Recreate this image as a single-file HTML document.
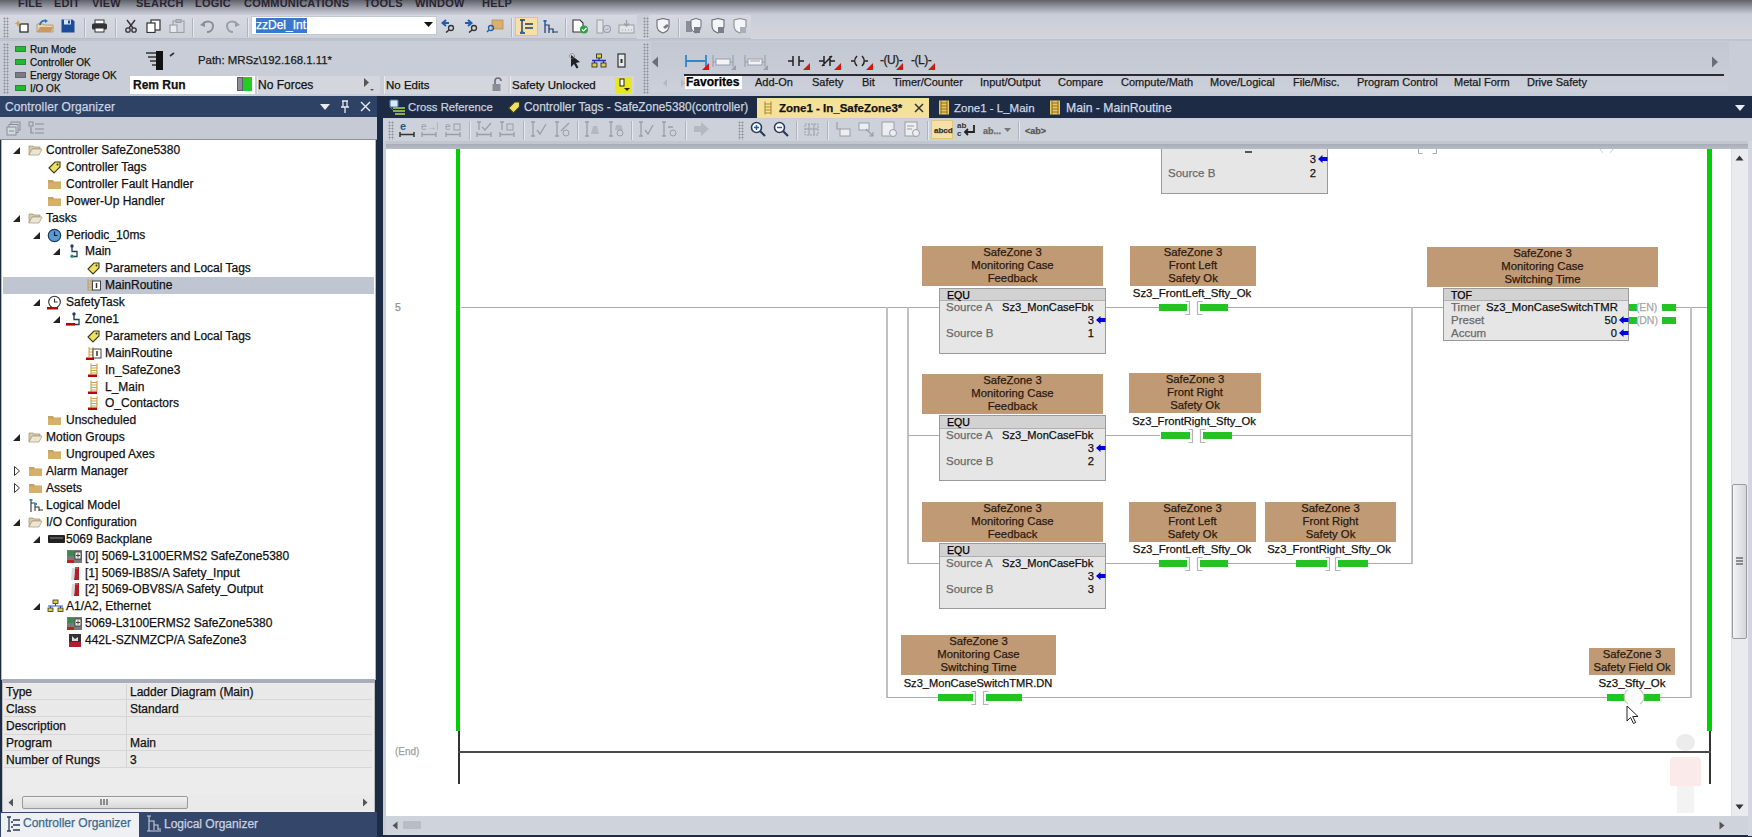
<!DOCTYPE html>
<html><head><meta charset="utf-8">
<style>
*{box-sizing:border-box;margin:0;padding:0}
html,body{width:1752px;height:837px;overflow:hidden;background:#cacfd9;font-family:"Liberation Sans",sans-serif;color:#111;position:relative}
.a{position:absolute;white-space:nowrap}
#menubar{left:0;top:0;width:1752px;height:14px;background:linear-gradient(#5f616b,#9c9fa9 55%,#c6cad4)}
#menubar span{position:absolute;top:-3.5px;font-size:11px;font-weight:bold;color:#2a2430;letter-spacing:0.2px}
#tb1{left:0;top:14px;width:1752px;height:27px;background:linear-gradient(#c9cdd7,#d3d6df)}
#status{left:0;top:41px;width:1752px;height:55px;background:#c9cdd7}
#navy{left:0;top:96px;width:1752px;height:741px;background:#1e2b45}
#lefthdr{left:0;top:96px;width:377px;height:21px;background:#2e4266}
#lefttool{left:0;top:117px;width:377px;height:23px;background:#c6cad5;border-bottom:1px solid #8e929c}
#tree{left:2px;top:140px;width:373px;height:539px;background:#fff}
#props{left:2px;top:680px;width:373px;height:131px;background:#e9e9e9}
#ltabs{left:0;top:812px;width:377px;height:25px;background:#34476a}
#rtool{left:383px;top:118px;width:1369px;height:25px;background:#c9cdd7}
#ladder{left:386px;top:149px;width:1345px;height:667px;background:#fff}
#vscroll{left:1731px;top:149px;width:19px;height:667px;background:#e6e8ec}
#hscroll{left:386px;top:816px;width:1366px;height:19px;background:#d4d8e0}
.tr{position:absolute;font-size:12px;color:#111;white-space:nowrap;line-height:14px}
.lt{position:absolute;font-size:11px;color:#000;white-space:nowrap}
.desc{position:absolute;background:#c09a75;font-size:11px;color:#2a1a10;text-align:center;line-height:13px;padding-top:0}
.box{position:absolute;background:#e6e6e6;border:1px solid #9a9a9a}
.box .h{position:absolute;left:0;top:0;right:0;height:12px;background:#d2d2d2;border-bottom:1px solid #b0b0b0;font-size:10.6px;padding-left:7px;line-height:12px;color:#000}
.lbl{position:absolute;font-size:11px;color:#6a6a6a;white-space:nowrap;line-height:13px}
.val{position:absolute;font-size:11px;color:#111;white-space:nowrap;line-height:13px}
.hl{position:absolute;height:1px;background:#a9a9a9}
.vl{position:absolute;width:1px;background:#b5b5b5}
.gb{position:absolute;height:7px;background:#22c422}
.grip{width:6px;background-image:radial-gradient(circle,#8e929c 0.9px,transparent 1.1px);background-size:3px 3px}
.sep{width:1px;height:19px;background:#b0b4be;box-shadow:1px 0 0 #e6e8ee}
.tabs span{top:0}
.tr,.val,.desc,.lbl,.box .h,.tabs{-webkit-text-stroke:0.25px currentColor}
</style></head><body>


<div id="menubar" class="a">
<span style="left:18px">FILE</span><span style="left:54px">EDIT</span><span style="left:92px">VIEW</span><span style="left:136px">SEARCH</span><span style="left:195px">LOGIC</span><span style="left:244px">COMMUNICATIONS</span><span style="left:364px">TOOLS</span><span style="left:415px">WINDOW</span><span style="left:482px">HELP</span>
</div>
<div id="tb1" class="a"></div>
<div id="status" class="a"></div>
<div id="navy" class="a"></div>
<div id="lefthdr" class="a"></div>
<div id="lefttool" class="a"></div>
<div id="tree" class="a"></div>
<div id="props" class="a"></div>
<div id="ltabs" class="a"></div>
<div id="rtool" class="a"></div>
<div id="ladder" class="a"></div>
<div id="vscroll" class="a"></div>
<div id="hscroll" class="a"></div>


<div class="a" style="left:3px;top:277px;width:371px;height:17px;background:#bfc6d2"></div>
<svg class="a" style="left:13px;top:145px" width="8" height="10"><path d="M7 2v7H0z" fill="#222"/></svg>
<div class="a" style="left:28px;top:143px;line-height:0"><svg width="15" height="14"><path d="M1 3h4l1 1h6v2H4L1 12z" fill="#d8ccb0" stroke="#a8946c" stroke-width="0.8"/><path d="M1 12l3-6h10l-3 6z" fill="#eee6d4" stroke="#b0a080" stroke-width="0.8"/></svg></div>
<div class="tr" style="left:46px;top:143px">Controller SafeZone5380</div>
<div class="a" style="left:47px;top:160px;line-height:0"><svg width="15" height="14"><path d="M2 8l6-6h5v5l-6 6z" fill="#f0e060" stroke="#3a3a20" stroke-width="1.1"/><circle cx="10.5" cy="4.5" r="1" fill="#333"/></svg></div>
<div class="tr" style="left:66px;top:160px">Controller Tags</div>
<div class="a" style="left:47px;top:177px;line-height:0"><svg width="15" height="14"><path d="M1 3h5l1 1.5h7V12H1z" fill="#c8a35e"/><path d="M1 5.5h13V12H1z" fill="#d4b06a"/></svg></div>
<div class="tr" style="left:66px;top:177px">Controller Fault Handler</div>
<div class="a" style="left:47px;top:194px;line-height:0"><svg width="15" height="14"><path d="M1 3h5l1 1.5h7V12H1z" fill="#c8a35e"/><path d="M1 5.5h13V12H1z" fill="#d4b06a"/></svg></div>
<div class="tr" style="left:66px;top:194px">Power-Up Handler</div>
<svg class="a" style="left:13px;top:213px" width="8" height="10"><path d="M7 2v7H0z" fill="#222"/></svg>
<div class="a" style="left:28px;top:211px;line-height:0"><svg width="15" height="14"><path d="M1 3h4l1 1h6v2H4L1 12z" fill="#d8ccb0" stroke="#a8946c" stroke-width="0.8"/><path d="M1 12l3-6h10l-3 6z" fill="#eee6d4" stroke="#b0a080" stroke-width="0.8"/></svg></div>
<div class="tr" style="left:46px;top:211px">Tasks</div>
<svg class="a" style="left:33px;top:230px" width="8" height="10"><path d="M7 2v7H0z" fill="#222"/></svg>
<div class="a" style="left:47px;top:228px;line-height:0"><svg width="15" height="15"><circle cx="7.5" cy="7.5" r="6.2" fill="#5b9bd5" stroke="#1f3a5a" stroke-width="1.2"/><path d="M7.5 3.5v4h3" stroke="#0a1a30" stroke-width="1.2" fill="none"/></svg></div>
<div class="tr" style="left:66px;top:228px">Periodic_10ms</div>
<svg class="a" style="left:53px;top:246px" width="8" height="10"><path d="M7 2v7H0z" fill="#222"/></svg>
<div class="a" style="left:66px;top:244px;line-height:0"><svg width="15" height="14"><path d="M6 2v5.5h5v5H6.5" stroke="#1f3f60" stroke-width="1.3" fill="none"/><circle cx="6" cy="2" r="1.7" fill="#1f3f60"/><circle cx="6" cy="12.2" r="1.7" fill="#2a8a7a"/></svg></div>
<div class="tr" style="left:85px;top:244px">Main</div>
<div class="a" style="left:86px;top:261px;line-height:0"><svg width="15" height="14"><path d="M2 8l6-6h5v5l-6 6z" fill="#f0e060" stroke="#3a3a20" stroke-width="1.1"/><circle cx="10.5" cy="4.5" r="1" fill="#333"/></svg></div>
<div class="tr" style="left:105px;top:261px">Parameters and Local Tags</div>
<div class="a" style="left:86px;top:278px;line-height:0"><svg width="16" height="14"><path d="M2 1v12M6 1v12M2 3h4M2 6h4M2 9h4M2 12h4" stroke="#c8a040" stroke-width="1"/><rect x="6.5" y="3" width="8" height="9" fill="#fff" stroke="#444" stroke-width="1"/><path d="M10.5 5v5" stroke="#333" stroke-width="1.5"/></svg></div>
<div class="tr" style="left:105px;top:278px">MainRoutine</div>
<svg class="a" style="left:33px;top:297px" width="8" height="10"><path d="M7 2v7H0z" fill="#222"/></svg>
<div class="a" style="left:47px;top:295px;line-height:0"><svg width="15" height="15"><circle cx="7.5" cy="7" r="5.8" fill="#fff" stroke="#333" stroke-width="1.1"/><path d="M7.5 3.5v3.5h3" stroke="#333" stroke-width="1.1" fill="none"/><rect x="0" y="12" width="11" height="2.5" fill="#b00"/></svg></div>
<div class="tr" style="left:66px;top:295px">SafetyTask</div>
<svg class="a" style="left:53px;top:314px" width="8" height="10"><path d="M7 2v7H0z" fill="#222"/></svg>
<div class="a" style="left:66px;top:312px;line-height:0"><svg width="15" height="14"><path d="M8 2v5.5h5v5H8.5" stroke="#1f3f60" stroke-width="1.3" fill="none"/><circle cx="8" cy="2" r="1.7" fill="#1f3f60"/><rect x="0" y="11" width="9" height="2.6" fill="#b00"/></svg></div>
<div class="tr" style="left:85px;top:312px">Zone1</div>
<div class="a" style="left:86px;top:329px;line-height:0"><svg width="15" height="14"><path d="M2 8l6-6h5v5l-6 6z" fill="#f0e060" stroke="#3a3a20" stroke-width="1.1"/><circle cx="10.5" cy="4.5" r="1" fill="#333"/></svg></div>
<div class="tr" style="left:105px;top:329px">Parameters and Local Tags</div>
<div class="a" style="left:86px;top:346px;line-height:0"><svg width="16" height="14"><path d="M3 1v10M7 1v10M3 3h4M3 6h4M3 9h4" stroke="#c8a040" stroke-width="1"/><rect x="7" y="3" width="8" height="9" fill="#fff" stroke="#444" stroke-width="1"/><path d="M11 5v5" stroke="#333" stroke-width="1.5"/><rect x="0" y="11.5" width="8" height="2.5" fill="#b00"/></svg></div>
<div class="tr" style="left:105px;top:346px">MainRoutine</div>
<div class="a" style="left:86px;top:363px;line-height:0"><svg width="16" height="14"><path d="M5 0.5v11M11 0.5v11M5 2.5h6M5 5h6M5 7.5h6M5 10h6" stroke="#c8a040" stroke-width="1.1"/><rect x="2" y="11.5" width="9" height="2.5" fill="#b00"/></svg></div>
<div class="tr" style="left:105px;top:363px">In_SafeZone3</div>
<div class="a" style="left:86px;top:380px;line-height:0"><svg width="16" height="14"><path d="M5 0.5v11M11 0.5v11M5 2.5h6M5 5h6M5 7.5h6M5 10h6" stroke="#c8a040" stroke-width="1.1"/><rect x="2" y="11.5" width="9" height="2.5" fill="#b00"/></svg></div>
<div class="tr" style="left:105px;top:380px">L_Main</div>
<div class="a" style="left:86px;top:396px;line-height:0"><svg width="16" height="14"><path d="M5 0.5v11M11 0.5v11M5 2.5h6M5 5h6M5 7.5h6M5 10h6" stroke="#c8a040" stroke-width="1.1"/><rect x="2" y="11.5" width="9" height="2.5" fill="#b00"/></svg></div>
<div class="tr" style="left:105px;top:396px">O_Contactors</div>
<div class="a" style="left:47px;top:413px;line-height:0"><svg width="15" height="14"><path d="M1 3h5l1 1.5h7V12H1z" fill="#c8a35e"/><path d="M1 5.5h13V12H1z" fill="#d4b06a"/></svg></div>
<div class="tr" style="left:66px;top:413px">Unscheduled</div>
<svg class="a" style="left:13px;top:432px" width="8" height="10"><path d="M7 2v7H0z" fill="#222"/></svg>
<div class="a" style="left:28px;top:430px;line-height:0"><svg width="15" height="14"><path d="M1 3h4l1 1h6v2H4L1 12z" fill="#d8ccb0" stroke="#a8946c" stroke-width="0.8"/><path d="M1 12l3-6h10l-3 6z" fill="#eee6d4" stroke="#b0a080" stroke-width="0.8"/></svg></div>
<div class="tr" style="left:46px;top:430px">Motion Groups</div>
<div class="a" style="left:47px;top:447px;line-height:0"><svg width="15" height="14"><path d="M1 3h5l1 1.5h7V12H1z" fill="#c8a35e"/><path d="M1 5.5h13V12H1z" fill="#d4b06a"/></svg></div>
<div class="tr" style="left:66px;top:447px">Ungrouped Axes</div>
<svg class="a" style="left:13px;top:465px" width="8" height="12"><path d="M1.5 1.5l5 4.5-5 4.5z" fill="#fff" stroke="#333" stroke-width="1"/></svg>
<div class="a" style="left:28px;top:464px;line-height:0"><svg width="15" height="14"><path d="M1 3h5l1 1.5h7V12H1z" fill="#c8a35e"/><path d="M1 5.5h13V12H1z" fill="#d4b06a"/></svg></div>
<div class="tr" style="left:46px;top:464px">Alarm Manager</div>
<svg class="a" style="left:13px;top:482px" width="8" height="12"><path d="M1.5 1.5l5 4.5-5 4.5z" fill="#fff" stroke="#333" stroke-width="1"/></svg>
<div class="a" style="left:28px;top:481px;line-height:0"><svg width="15" height="14"><path d="M1 3h5l1 1.5h7V12H1z" fill="#c8a35e"/><path d="M1 5.5h13V12H1z" fill="#d4b06a"/></svg></div>
<div class="tr" style="left:46px;top:481px">Assets</div>
<div class="a" style="left:28px;top:498px;line-height:0"><svg width="16" height="15"><path d="M3 1v13M3 5h4v8M7 9h4v4M11 12h4" stroke="#333" stroke-width="1.1" fill="none"/><rect x="1.5" y="1" width="3" height="2" fill="#3a8ac0"/><rect x="6" y="5" width="3" height="2" fill="#3a8ac0"/></svg></div>
<div class="tr" style="left:46px;top:498px">Logical Model</div>
<svg class="a" style="left:13px;top:517px" width="8" height="10"><path d="M7 2v7H0z" fill="#222"/></svg>
<div class="a" style="left:28px;top:515px;line-height:0"><svg width="15" height="14"><path d="M1 3h4l1 1h6v2H4L1 12z" fill="#d8ccb0" stroke="#a8946c" stroke-width="0.8"/><path d="M1 12l3-6h10l-3 6z" fill="#eee6d4" stroke="#b0a080" stroke-width="0.8"/></svg></div>
<div class="tr" style="left:46px;top:515px">I/O Configuration</div>
<svg class="a" style="left:33px;top:534px" width="8" height="10"><path d="M7 2v7H0z" fill="#222"/></svg>
<div class="a" style="left:47px;top:532px;line-height:0"><svg width="19" height="14"><rect x="1" y="3" width="17" height="8" rx="1" fill="#222"/><rect x="3" y="5" width="13" height="2" fill="#555"/></svg></div>
<div class="tr" style="left:66px;top:532px">5069 Backplane</div>
<div class="a" style="left:66px;top:549px;line-height:0"><svg width="17" height="15"><rect x="1" y="1" width="15" height="13" fill="#7a7a7a"/><rect x="2" y="2" width="6" height="5" fill="#3a8a4a"/><rect x="9" y="3" width="6" height="7" fill="#eee" stroke="#333" stroke-width="0.8"/><path d="M12 4.5v4M10 6.5h4" stroke="#333" stroke-width="0.9"/><rect x="1" y="11" width="7" height="3" fill="#b22"/></svg></div>
<div class="tr" style="left:85px;top:549px">[0] 5069-L3100ERMS2 SafeZone5380</div>
<div class="a" style="left:66px;top:566px;line-height:0"><svg width="17" height="15"><path d="M9 1h4v13H8z" fill="#b0202a"/><path d="M6 2h3l-1 12H5z" fill="#d8d8d8"/><path d="M9 1h3v2H9z" fill="#e04050"/></svg></div>
<div class="tr" style="left:85px;top:566px">[1] 5069-IB8S/A Safety_Input</div>
<div class="a" style="left:66px;top:582px;line-height:0"><svg width="17" height="15"><path d="M9 1h4v13H8z" fill="#b0202a"/><path d="M6 2h3l-1 12H5z" fill="#d8d8d8"/><path d="M9 1h3v2H9z" fill="#e04050"/></svg></div>
<div class="tr" style="left:85px;top:582px">[2] 5069-OBV8S/A Safety_Output</div>
<svg class="a" style="left:33px;top:601px" width="8" height="10"><path d="M7 2v7H0z" fill="#222"/></svg>
<div class="a" style="left:47px;top:599px;line-height:0"><svg width="17" height="14"><rect x="6" y="1" width="5" height="3.5" fill="#d8d040" stroke="#333" stroke-width="0.8"/><path d="M8.5 4.5v2.5M1 7h15M3.5 7v2M13.5 7v2" stroke="#3050c0" stroke-width="1.2"/><rect x="1" y="9" width="5" height="3.5" fill="#d8d040" stroke="#333" stroke-width="0.8"/><rect x="11" y="9" width="5" height="3.5" fill="#d8d040" stroke="#333" stroke-width="0.8"/></svg></div>
<div class="tr" style="left:66px;top:599px">A1/A2, Ethernet</div>
<div class="a" style="left:66px;top:616px;line-height:0"><svg width="17" height="15"><rect x="1" y="1" width="15" height="13" fill="#7a7a7a"/><rect x="2" y="2" width="6" height="5" fill="#3a8a4a"/><rect x="9" y="3" width="6" height="7" fill="#eee" stroke="#333" stroke-width="0.8"/><path d="M12 4.5v4M10 6.5h4" stroke="#333" stroke-width="0.9"/><rect x="1" y="11" width="7" height="3" fill="#b22"/></svg></div>
<div class="tr" style="left:85px;top:616px">5069-L3100ERMS2 SafeZone5380</div>
<div class="a" style="left:66px;top:633px;line-height:0"><svg width="17" height="15"><rect x="3" y="1" width="12" height="13" fill="#333"/><rect x="3" y="9" width="12" height="5" fill="#b0202a"/><path d="M6 3l3 3 3-2v4H6z" fill="#ddd"/></svg></div>
<div class="tr" style="left:85px;top:633px">442L-SZNMZCP/A SafeZone3</div>
<!-- left header -->
<div class="tr" style="left:5px;top:100px;color:#cbd3e2;font-size:12px;letter-spacing:0.1px">Controller Organizer</div>
<svg class="a" style="left:319px;top:103px" width="12" height="8"><path d="M1 1h10l-5 6z" fill="#e8ecf4"/></svg>
<svg class="a" style="left:340px;top:100px" width="10" height="14"><path d="M2 1h6M3 1v6h4V1M1 7h8M5 7v6" stroke="#e8ecf4" stroke-width="1.3" fill="none"/></svg>
<svg class="a" style="left:360px;top:101px" width="11" height="11"><path d="M1 1l9 9M10 1l-9 9" stroke="#e8ecf4" stroke-width="1.4"/></svg>
<!-- left toolstrip icons -->
<svg class="a" style="left:6px;top:121px" width="16" height="15"><rect x="5" y="1" width="9" height="8" fill="none" stroke="#8a8e98"/><rect x="3" y="3.5" width="9" height="8" fill="#d4d7de" stroke="#8a8e98"/><rect x="1" y="6" width="9" height="8" fill="#d4d7de" stroke="#8a8e98"/><path d="M3 10h5" stroke="#8a8e98"/></svg>
<svg class="a" style="left:28px;top:121px" width="17" height="15"><rect x="1" y="1" width="4" height="4" fill="none" stroke="#8a8e98"/><path d="M7 3h9M7 8h9M7 12h9M3 6v6h3" stroke="#8a8e98" stroke-width="1.2" fill="none"/></svg>
<!-- tree border -->
<div class="a" style="left:1px;top:140px;width:375px;height:540px;border:1px solid #b4b8c2;border-top:none"></div>
<!-- props -->
<div class="a" style="left:2px;top:679px;width:373px;height:4px;background:#a9adb7"></div>
<div class="a" style="left:2px;top:683px;width:373px;height:129px;background:#ececec;border-left:1px solid #bbb;border-right:1px solid #bbb"></div>
<div class="a" style="left:4px;top:684px;width:368px;height:84px;background:
linear-gradient(#d6d6d6,#d6d6d6) 0 15px/100% 1px no-repeat,
linear-gradient(#d6d6d6,#d6d6d6) 0 32px/100% 1px no-repeat,
linear-gradient(#d6d6d6,#d6d6d6) 0 50px/100% 1px no-repeat,
linear-gradient(#d6d6d6,#d6d6d6) 0 66px/100% 1px no-repeat,
linear-gradient(#d6d6d6,#d6d6d6) 0 83px/100% 1px no-repeat,
linear-gradient(#d6d6d6,#d6d6d6) 122px 0/1px 100% no-repeat,#e9e9e9"></div>
<div class="tr" style="left:6px;top:685px">Type</div><div class="tr" style="left:130px;top:685px">Ladder Diagram (Main)</div>
<div class="tr" style="left:6px;top:702px">Class</div><div class="tr" style="left:130px;top:702px">Standard</div>
<div class="tr" style="left:6px;top:719px">Description</div>
<div class="tr" style="left:6px;top:736px">Program</div><div class="tr" style="left:130px;top:736px">Main</div>
<div class="tr" style="left:6px;top:753px">Number of Rungs</div><div class="tr" style="left:130px;top:753px">3</div>
<!-- props hscroll -->
<div class="a" style="left:3px;top:795px;width:371px;height:15px;background:#eaeaea"></div>
<svg class="a" style="left:8px;top:798px" width="6" height="9"><path d="M5 0.5v8L0.5 4.5z" fill="#555"/></svg>
<svg class="a" style="left:362px;top:798px" width="6" height="9"><path d="M1 0.5v8L5.5 4.5z" fill="#555"/></svg>
<div class="a" style="left:22px;top:796px;width:166px;height:13px;border:1px solid #9a9a9a;border-radius:2px;background:linear-gradient(#f2f2f2,#d8d8d8)"></div>
<svg class="a" style="left:100px;top:799px" width="8" height="6"><path d="M1 0v6M4 0v6M7 0v6" stroke="#333" stroke-width="1"/></svg>
<!-- bottom tabs -->
<div class="a" style="left:1px;top:813px;width:138px;height:24px;background:#eef0f4"></div>
<svg class="a" style="left:5px;top:816px" width="16" height="17"><path d="M2 1h4M4 1v14M2 15h4M8 4h7M8 9h7M8 14h7M6 6h2M6 11h2" stroke="#2a3a5a" stroke-width="1.3" fill="none"/></svg>
<div class="tr" style="left:23px;top:816px;color:#3a6a8e;font-size:12px">Controller Organizer</div>
<svg class="a" style="left:145px;top:815px" width="17" height="17"><path d="M2 1h4M4 1v15M4 6h5v9M9 10h4v5M13 14h3M2 16h14" stroke="#c8d0e0" stroke-width="1.1" fill="none"/></svg>
<div class="tr" style="left:164px;top:817px;color:#c9d1e0;font-size:12px">Logical Organizer</div>
<!-- toolbar row 1 -->
<div class="a" style="left:0;top:15px;width:637px;height:24px;background:linear-gradient(#d6d9e1,#cdd1da);border-bottom:1px solid #b9bdc7"></div>
<div class="a" style="left:649px;top:15px;width:102px;height:24px;background:linear-gradient(#d6d9e1,#cdd1da);border-bottom:1px solid #b9bdc7"></div>
<div class="a" style="left:0;top:39px;width:1752px;height:2px;background:#bfc3cd"></div>
<div class="a grip" style="left:3px;top:17px;height:21px"></div>
<div class="a grip" style="left:643px;top:17px;height:21px"></div>
<div class="a grip" style="left:3px;top:43px;height:51px"></div>
<div class="a grip" style="left:643px;top:43px;height:51px"></div>
<!-- new -->
<svg class="a" style="left:14px;top:19px" width="16" height="14"><rect x="6" y="5" width="8" height="8" fill="#fff" stroke="#222" stroke-width="1.2"/><path d="M4 1l1 2.5 2.5 1-2.5 1L4 8 3 5.5.5 4.5 3 3.5z" fill="#d8a040"/></svg>
<!-- open -->
<svg class="a" style="left:36px;top:19px" width="18" height="14"><path d="M1 5h6l1 1h9v7H1z" fill="#e8d6b0" stroke="#b09060" stroke-width="0.8"/><path d="M1 13l3-5h13l-2 5z" fill="#c89a60"/><path d="M4 6c0-3 3-5 6-4" stroke="#2a70c0" stroke-width="1.8" fill="none"/><path d="M9 0l3 2-3 2z" fill="#2a70c0"/></svg>
<!-- save -->
<svg class="a" style="left:61px;top:19px" width="14" height="14"><path d="M0.5 0.5h11l2 2v11h-13z" fill="#1a4c9a"/><rect x="3" y="0.5" width="7" height="5" fill="#d8e2f0"/><rect x="7" y="1.5" width="2" height="3" fill="#1a4c9a"/></svg>
<div class="a sep" style="left:84px;top:18px"></div>
<!-- print -->
<svg class="a" style="left:91px;top:19px" width="17" height="14"><rect x="4" y="1" width="9" height="4" fill="#fff" stroke="#333"/><rect x="1" y="4.5" width="15" height="6" rx="1.5" fill="#333"/><rect x="4" y="9" width="9" height="4" fill="#fff" stroke="#333"/></svg>
<div class="a sep" style="left:115px;top:18px"></div>
<!-- cut -->
<svg class="a" style="left:124px;top:19px" width="14" height="14"><path d="M3 1l6 8M11 1L5 9" stroke="#333" stroke-width="1.4"/><circle cx="4" cy="11" r="2.2" fill="none" stroke="#333" stroke-width="1.3"/><circle cx="10" cy="11" r="2.2" fill="none" stroke="#333" stroke-width="1.3"/></svg>
<!-- copy -->
<svg class="a" style="left:146px;top:19px" width="15" height="14"><rect x="5" y="1" width="9" height="10" fill="#fff" stroke="#333" stroke-width="1.2"/><rect x="1" y="4" width="8" height="9.5" fill="#fff" stroke="#333" stroke-width="1.2"/></svg>
<!-- paste -->
<svg class="a" style="left:169px;top:19px" width="16" height="14"><rect x="4" y="2" width="11" height="11.5" fill="none" stroke="#9a9ea8" stroke-width="1.1"/><rect x="7" y="0.5" width="5" height="3" fill="none" stroke="#9a9ea8"/><rect x="1" y="6" width="7" height="7.5" fill="#e8eaee" stroke="#9a9ea8" stroke-width="1.1"/></svg>
<div class="a sep" style="left:192px;top:18px"></div>
<!-- undo/redo -->
<svg class="a" style="left:200px;top:19px" width="15" height="14"><path d="M3 5c3-4 10-3 10 2s-4 6-6 6" stroke="#8a8e98" stroke-width="2" fill="none"/><path d="M0 6l5-4v6z" fill="#8a8e98"/></svg>
<svg class="a" style="left:225px;top:19px" width="15" height="14"><path d="M12 5C9 1 2 2 2 7s4 6 6 6" stroke="#9a9ea8" stroke-width="2" fill="none"/><path d="M15 6l-5-4v6z" fill="#9a9ea8"/></svg>
<div class="a sep" style="left:247px;top:18px"></div>
<!-- combo -->
<div class="a" style="left:251px;top:16px;width:186px;height:19px;background:#fff;border:1px solid #c4c8d0"></div>
<div class="a" style="left:256px;top:18px;width:51px;height:15px;background:#3a78d0"></div>
<div class="tr" style="left:256px;top:18px;color:#fff;font-size:12px;line-height:15px">zzDel_Int</div>
<svg class="a" style="left:424px;top:22px" width="9" height="6"><path d="M0 0h9L4.5 5z" fill="#111"/></svg>
<!-- search icons -->
<svg class="a" style="left:441px;top:19px" width="16" height="14"><path d="M8 4H2M5 1L1.5 4 5 7" stroke="#1f5fb0" stroke-width="2" fill="none"/><circle cx="10" cy="9" r="2.5" fill="none" stroke="#333" stroke-width="1.3"/><path d="M8 11l-3 2.5" stroke="#333" stroke-width="1.6"/></svg>
<svg class="a" style="left:464px;top:19px" width="16" height="14"><path d="M1 4h6M4 1l3.5 3L4 7" stroke="#1f5fb0" stroke-width="2" fill="none"/><circle cx="10" cy="9" r="2.5" fill="none" stroke="#333" stroke-width="1.3"/><path d="M8 11l-3 2.5" stroke="#333" stroke-width="1.6"/></svg>
<svg class="a" style="left:486px;top:19px" width="18" height="14"><rect x="6" y="1" width="11" height="9" fill="#d8b070" stroke="#b89050" stroke-width="0.8"/><circle cx="5" cy="9" r="2.5" fill="none" stroke="#1f5fb0" stroke-width="1.3"/><path d="M3 11l-2 2" stroke="#1f5fb0" stroke-width="1.6"/></svg>
<div class="a sep" style="left:511px;top:18px"></div>
<div class="a" style="left:515px;top:17px;width:23px;height:19px;background:#f7e0a8;border:1px solid #e6c27a"></div>
<svg class="a" style="left:519px;top:19px" width="16" height="15"><path d="M1 1h5M3 1v13M1 14h5M8 5h6M8 9h6M6 5h2M6 9h2" stroke="#1a3a6a" stroke-width="1.4" fill="none"/><circle cx="3" cy="13" r="1.5" fill="#1f6ac0"/></svg>
<svg class="a" style="left:542px;top:19px" width="17" height="15"><path d="M3 1v13M3 6h4v8M7 10h4v4M11 13h5" stroke="#1a3a6a" stroke-width="1.2" fill="none"/><rect x="1.5" y="1" width="3" height="2" fill="#1f6ac0"/></svg>
<div class="a sep" style="left:565px;top:18px"></div>
<svg class="a" style="left:572px;top:19px" width="17" height="15"><path d="M1 1h7l3 3v9H1z" fill="#fff" stroke="#333" stroke-width="1.1"/><circle cx="12" cy="10.5" r="4" fill="#2ea040"/><path d="M10 10.5l1.5 1.5 3-3" stroke="#fff" stroke-width="1.2" fill="none"/></svg>
<svg class="a" style="left:596px;top:19px" width="16" height="15"><rect x="1" y="1" width="6" height="13" fill="#e2e4e8" stroke="#9a9ea8"/><circle cx="11" cy="10" r="3.5" fill="none" stroke="#9a9ea8" stroke-width="1.1"/><path d="M9.5 10l1 1 2-2" stroke="#9a9ea8" fill="none"/></svg>
<svg class="a" style="left:618px;top:19px" width="17" height="15"><rect x="1" y="6" width="15" height="8" fill="#e2e4e8" stroke="#9a9ea8"/><path d="M8.5 1v6M6 4.5l2.5 2.5 2.5-2.5" stroke="#9a9ea8" stroke-width="1.3" fill="none"/><path d="M4 11h1M7 11h1M10 11h1M13 11h1" stroke="#9a9ea8"/></svg>
<!-- shields -->
<svg class="a" style="left:655px;top:18px" width="16" height="16"><path d="M2 2l6-1.5L14 2v6c0 4-3 6-6 7-3-1-6-3-6-7z" fill="#f4f5f7" stroke="#6a6e78" stroke-width="1.1"/><path d="M8 9l4-3 2 2-4 3z" fill="#7a7e88"/></svg>
<div class="a sep" style="left:678px;top:18px"></div>
<svg class="a" style="left:685px;top:18px" width="17" height="16"><rect x="1" y="3" width="6" height="11" fill="#8a8e98"/><path d="M6 2l5-1.5L16 2v6c0 4-2.5 6-5 7-2.5-1-5-3-5-7z" fill="#f4f5f7" stroke="#6a6e78"/><rect x="9" y="9" width="6" height="6" fill="#7a7e88"/></svg>
<svg class="a" style="left:710px;top:18px" width="16" height="16"><path d="M2 2l6-1.5L14 2v6c0 4-3 6-6 7-3-1-6-3-6-7z" fill="#f4f5f7" stroke="#6a6e78" stroke-width="1.1"/><rect x="8" y="9" width="6" height="6" fill="#7a7e88"/></svg>
<svg class="a" style="left:732px;top:18px" width="16" height="16"><path d="M2 2l6-1.5L14 2v6c0 4-3 6-6 7-3-1-6-3-6-7z" fill="#f4f5f7" stroke="#8a8e98" stroke-width="1.1"/><rect x="8" y="9" width="6" height="6" fill="#aaaeb8"/></svg>

<!-- status row -->
<div class="a" style="left:15px;top:46px;width:11px;height:6px;background:#22b830;border:1px solid #2a8a30"></div>
<div class="a" style="left:15px;top:59px;width:11px;height:6px;background:#22b830;border:1px solid #2a8a30"></div>
<div class="a" style="left:15px;top:72px;width:11px;height:6px;background:#7a7c80;border:1px solid #65676b"></div>
<div class="a" style="left:15px;top:85px;width:11px;height:6px;background:#22b830;border:1px solid #2a8a30"></div>
<div class="tr" style="left:30px;top:44px;font-size:10px;line-height:12px">Run Mode</div>
<div class="tr" style="left:30px;top:57px;font-size:10px;line-height:12px">Controller OK</div>
<div class="tr" style="left:30px;top:70px;font-size:10px;line-height:12px">Energy Storage OK</div>
<div class="tr" style="left:30px;top:83px;font-size:10px;line-height:12px">I/O OK</div>
<svg class="a" style="left:145px;top:50px" width="32" height="21"><rect x="11" y="1" width="7" height="19" fill="#111"/><path d="M1 3h10M3 7h8M5 11h6M7 15h4" stroke="#333" stroke-width="1.6"/><path d="M25 6l4-3" stroke="#333" stroke-width="1.6"/></svg>
<div class="tr" style="left:198px;top:53px;font-size:11.4px;color:#1a1a1a">Path: MRSz\192.168.1.11*</div>
<div class="a" style="left:130px;top:76px;width:125px;height:18px;background:#fff"></div>
<div class="tr" style="left:133px;top:78px;font-size:12px;font-weight:bold">Rem Run</div>
<div class="a" style="left:237px;top:77px;width:6px;height:14px;background:#8a8e98;border:1px solid #5a5e68"></div>
<div class="a" style="left:243px;top:77px;width:9px;height:14px;background:#22cc22"></div>
<div class="a" style="left:257px;top:76px;width:123px;height:18px;background:#d3d6dd;border-left:1px solid #e8eaee"></div>
<div class="tr" style="left:258px;top:78px;font-size:12px">No Forces</div>
<svg class="a" style="left:363px;top:77px" width="12" height="16"><path d="M1 1v9l5-4.5z" fill="#555"/><path d="M7 12h4l-2 2z" fill="#555"/></svg>
<div class="a" style="left:384px;top:76px;width:124px;height:18px;background:#d3d6dd;border-left:1px solid #e8eaee"></div>
<div class="tr" style="left:386px;top:78px;font-size:11.5px">No Edits</div>
<svg class="a" style="left:491px;top:77px" width="14" height="15"><path d="M4 7V4a3 3 0 0 1 6 0" stroke="#6a6e78" stroke-width="1.6" fill="none"/><rect x="1.5" y="7" width="8" height="7" fill="#8a8e98"/></svg>
<div class="a" style="left:510px;top:76px;width:124px;height:18px;background:#d3d6dd;border-left:1px solid #e8eaee"></div>
<div class="tr" style="left:512px;top:78px;font-size:11.5px">Safety Unlocked</div>
<div class="a" style="left:615px;top:77px;width:17px;height:16px;background:#e8e820"></div>
<svg class="a" style="left:618px;top:78px" width="12" height="14"><rect x="2" y="1" width="4" height="7" fill="#fff" stroke="#222"/><path d="M6 10h6l-3 3z" fill="#222"/></svg>
<svg class="a" style="left:568px;top:53px" width="14" height="16"><path d="M3 2l9 7-4 1 2.5 4.5-2 1L6 11l-3 3z" fill="#222"/><circle cx="4" cy="3" r="2.5" fill="none" stroke="#777" stroke-dasharray="1 1"/></svg>
<svg class="a" style="left:591px;top:53px" width="16" height="15"><rect x="5.5" y="1" width="5" height="4" fill="#d8d040" stroke="#333" stroke-width="0.9"/><path d="M8 5v2.5M1 7.5h14M3.5 7.5v3M12.5 7.5v3" stroke="#2030c0" stroke-width="1.3"/><rect x="1" y="10" width="5" height="4" fill="#d8d040" stroke="#333" stroke-width="0.9"/><rect x="10" y="10" width="5" height="4" fill="#d8d040" stroke="#333" stroke-width="0.9"/></svg>
<svg class="a" style="left:617px;top:53px" width="10" height="15"><rect x="1" y="1" width="7" height="13" fill="#e8e8e8" stroke="#333" stroke-width="1.2"/><rect x="3.5" y="6" width="2" height="4" fill="#333"/></svg>

<!-- ladder element toolbar -->
<div class="a" style="left:651px;top:42px;width:1078px;height:50px;background:linear-gradient(#c3c7d1,#c8ccd6 60%,#ccd0da)"></div>
<svg class="a" style="left:651px;top:56px" width="8" height="12"><path d="M7 0.5v11L1 6z" fill="#6a6e78"/></svg>
<svg class="a" style="left:1711px;top:56px" width="8" height="12"><path d="M1 0.5v11L7 6z" fill="#6a6e78"/></svg>
<div class="a" style="left:684px;top:74px;width:1040px;height:2px;background:#2a2a30"></div>
<svg class="a" style="left:684px;top:54px" width="26" height="16"><path d="M2 1v12M22 1v12M2 7h20" stroke="#2a8ad0" stroke-width="1.8"/><path d="M25 9v7h-7z" fill="#d01818"/></svg>
<svg class="a" style="left:711px;top:54px" width="26" height="16"><path d="M2 1v12M22 1v12M2 8h20" stroke="#9a9ea8" stroke-width="1.1"/><rect x="5" y="5" width="14" height="6" fill="#f4f4f6" stroke="#9a9ea8"/><path d="M25 11v5h-5z" fill="#9a9ea8"/></svg>
<svg class="a" style="left:743px;top:54px" width="26" height="16"><path d="M2 1v12M22 1v12M2 8h20" stroke="#9a9ea8" stroke-width="1.1"/><rect x="5" y="5" width="14" height="6" fill="#f4f4f6" stroke="#9a9ea8"/><path d="M7 7h10" stroke="#9a9ea8"/><path d="M25 11v5h-5z" fill="#9a9ea8"/></svg>
<svg class="a" style="left:787px;top:54px" width="26" height="16"><path d="M1 7h5M6 2v10M12 2v10M12 7h5" stroke="#222" stroke-width="1.5"/><path d="M23 9v7h-7z" fill="#d01818"/></svg>
<svg class="a" style="left:818px;top:54px" width="26" height="16"><path d="M1 7h5M6 2v10M12 2v10M12 7h5M4 12l10-10" stroke="#222" stroke-width="1.5"/><path d="M23 9v7h-7z" fill="#d01818"/></svg>
<svg class="a" style="left:850px;top:54px" width="26" height="16"><path d="M1 7h3M7 2c-3 3-3 7 0 10M12 2c3 3 3 7 0 10M15 7h3" stroke="#222" stroke-width="1.5" fill="none"/><path d="M23 9v7h-7z" fill="#d01818"/></svg>
<div class="tr" style="left:880px;top:53px;font-size:12px;color:#222;letter-spacing:-0.5px">-(U)-</div>
<svg class="a" style="left:896px;top:63px" width="8" height="8"><path d="M7 0v7H0z" fill="#d01818"/></svg>
<div class="tr" style="left:911px;top:53px;font-size:12px;color:#222;letter-spacing:-0.5px">-(L)-</div>
<svg class="a" style="left:928px;top:63px" width="8" height="8"><path d="M7 0v7H0z" fill="#d01818"/></svg>
<svg class="a" style="left:662px;top:78px" width="24" height="10"><path d="M5 1v8L1 5z" fill="#b4b8c2"/><path d="M19 1v8l4-4z" fill="#b4b8c2"/></svg>
<div class="a" style="left:685px;top:76px;width:57px;height:13px;background:#fff"></div>
<div class="tr" style="left:686px;top:75px;font-size:12px;font-weight:bold;color:#000">Favorites</div>
<div class="tabs tr" style="top:75px;font-size:11px;color:#1a1a1a">
<span class="a" style="left:755px">Add-On</span><span class="a" style="left:812px">Safety</span><span class="a" style="left:862px">Bit</span><span class="a" style="left:893px">Timer/Counter</span><span class="a" style="left:980px">Input/Output</span><span class="a" style="left:1058px">Compare</span><span class="a" style="left:1121px">Compute/Math</span><span class="a" style="left:1210px">Move/Logical</span><span class="a" style="left:1293px">File/Misc.</span><span class="a" style="left:1357px">Program Control</span><span class="a" style="left:1454px">Metal Form</span><span class="a" style="left:1527px">Drive Safety</span>
</div>
<!-- tab strip -->
<svg class="a" style="left:389px;top:99px" width="18" height="17"><rect x="1" y="1" width="8" height="7" rx="1" fill="#dce8f4" stroke="#4a80b0" stroke-width="1.1"/><path d="M4 9h12M4 12h12M6 15h10" stroke="#8ab040" stroke-width="2.2"/><path d="M1 8l3 3" stroke="#4a80b0"/></svg>
<div class="tr" style="left:408px;top:100px;color:#cad2df;font-size:11.3px">Cross Reference</div>
<svg class="a" style="left:507px;top:100px" width="14" height="14"><path d="M1.5 8l6-6h5v5l-6 6z" fill="#f0e060" stroke="#3a3a20" stroke-width="1.1"/></svg>
<div class="tr" style="left:524px;top:100px;color:#cad2df;font-size:11.85px">Controller Tags - SafeZone5380(controller)</div>
<div class="a" style="left:757px;top:98px;width:172px;height:20px;background:#f5e29a"></div>
<svg class="a" style="left:763px;top:101px" width="10" height="14"><path d="M2 0.5v13M8 0.5v13M2 3h6M2 6h6M2 9h6M2 12h6" stroke="#b08a30" stroke-width="1.1"/></svg>
<div class="tr" style="left:779px;top:101px;color:#111;font-size:11.5px;font-weight:bold">Zone1 - In_SafeZone3*</div>
<svg class="a" style="left:914px;top:103px" width="10" height="10"><path d="M1 1l8 8M9 1l-8 8" stroke="#333" stroke-width="1.5"/></svg>
<svg class="a" style="left:938px;top:100px" width="12" height="15"><rect x="1" y="0.5" width="10" height="14" fill="#e8c860"/><path d="M3 0.5v14M9 0.5v14M3 3h6M3 6h6M3 9h6M3 12h6" stroke="#8a6a20" stroke-width="1"/></svg>
<div class="tr" style="left:954px;top:101px;color:#cfd6e4;font-size:11.5px">Zone1 - L_Main</div>
<svg class="a" style="left:1049px;top:100px" width="12" height="15"><rect x="1" y="0.5" width="10" height="14" fill="#e8c860"/><path d="M3 0.5v14M9 0.5v14M3 3h6M3 6h6M3 9h6M3 12h6" stroke="#8a6a20" stroke-width="1"/></svg>
<div class="tr" style="left:1066px;top:101px;color:#cfd6e4;font-size:12.2px">Main - MainRoutine</div>
<svg class="a" style="left:1734px;top:104px" width="12" height="8"><path d="M1 1h10l-5 6z" fill="#e8ecf4"/></svg>

<!-- ladder toolbar -->
<div class="a" style="left:383px;top:141px;width:3px;height:694px;background:#c9cdd6"></div>
<div class="a" style="left:383px;top:119px;width:1369px;height:22px;background:#cdd1da"></div>
<div class="a" style="left:386px;top:141px;width:1366px;height:3px;background:#c2c6d0"></div>
<div class="a" style="left:386px;top:144px;width:1366px;height:5px;background:linear-gradient(#a8acb6,#b8bcc6)"></div>
<div class="a grip" style="left:388px;top:121px;height:19px"></div>
<div class="a grip" style="left:738px;top:121px;height:19px"></div>
<svg class="a" style="left:399px;top:121px" width="17" height="17"><text x="1" y="9" font-family="Liberation Sans" font-weight="bold" font-size="11" fill="#1f5a8a">e</text><path d="M1 11v5M15 11v5M1 13.5h14" stroke="#333" stroke-width="1.5"/></svg>
<svg class="a" style="left:421px;top:121px" width="17" height="17"><text x="0" y="9" font-family="Liberation Sans" font-size="10" fill="#9a9ea8">e→I</text><path d="M1 11v5M15 11v5M1 13.5h14" stroke="#9a9ea8" stroke-width="1.3"/></svg>
<svg class="a" style="left:445px;top:121px" width="17" height="17"><text x="0" y="9" font-family="Liberation Sans" font-size="10" fill="#9a9ea8">e</text><rect x="9" y="3" width="6" height="6" fill="none" stroke="#9a9ea8"/><path d="M1 11v5M15 11v5M1 13.5h14" stroke="#9a9ea8" stroke-width="1.3"/></svg>
<div class="a sep" style="left:469px;top:121px"></div>
<svg class="a" style="left:476px;top:121px" width="17" height="17"><path d="M3 1v8M1 1h4M6 6l3 3 6-7" stroke="#9a9ea8" stroke-width="1.3" fill="none"/><path d="M1 11v5M15 11v5M1 13.5h14" stroke="#9a9ea8" stroke-width="1.3"/></svg>
<svg class="a" style="left:499px;top:121px" width="17" height="17"><path d="M3 1v8M1 1h4" stroke="#9a9ea8" stroke-width="1.3"/><rect x="8" y="3" width="6" height="6" fill="none" stroke="#9a9ea8"/><path d="M1 11v5M15 11v5M1 13.5h14" stroke="#9a9ea8" stroke-width="1.3"/></svg>
<div class="a sep" style="left:523px;top:121px"></div>
<svg class="a" style="left:530px;top:121px" width="17" height="17"><path d="M3 1v14M1 1h4M1 15h4M7 9l3 4 6-10" stroke="#9a9ea8" stroke-width="1.3" fill="none"/></svg>
<svg class="a" style="left:554px;top:121px" width="17" height="17"><path d="M3 1v14M1 1h4M1 15h4M7 10l8-8" stroke="#9a9ea8" stroke-width="1.3" fill="none"/><circle cx="12" cy="12" r="3" fill="none" stroke="#9a9ea8"/></svg>
<div class="a sep" style="left:577px;top:121px"></div>
<svg class="a" style="left:584px;top:121px" width="17" height="17"><path d="M3 1v14M1 1h4M1 15h4" stroke="#9a9ea8" stroke-width="1.3"/><path d="M9 5h4l2 8H7z" fill="#b4b8c2"/></svg>
<svg class="a" style="left:608px;top:121px" width="17" height="17"><path d="M3 1v14M1 1h4M1 15h4" stroke="#9a9ea8" stroke-width="1.3"/><path d="M8 4h5l2 5H7z" fill="#b4b8c2"/><circle cx="12" cy="12" r="3" fill="none" stroke="#9a9ea8"/></svg>
<div class="a sep" style="left:631px;top:121px"></div>
<svg class="a" style="left:638px;top:121px" width="17" height="17"><path d="M3 1v14M1 1h4M1 15h4M7 9l3 4 5-9" stroke="#9a9ea8" stroke-width="1.3" fill="none"/></svg>
<svg class="a" style="left:661px;top:121px" width="17" height="17"><path d="M3 1v14M1 1h4M1 15h4M7 6h5" stroke="#9a9ea8" stroke-width="1.3" fill="none"/><circle cx="12" cy="12" r="3" fill="none" stroke="#9a9ea8"/></svg>
<div class="a sep" style="left:685px;top:121px"></div>
<svg class="a" style="left:693px;top:121px" width="17" height="17"><path d="M1 5h7V1l8 7-8 7v-4H1z" fill="#b4b8c2"/></svg>
<svg class="a" style="left:750px;top:121px" width="17" height="17"><circle cx="6.5" cy="6.5" r="5" fill="#fff" stroke="#2a3a5a" stroke-width="1.6"/><path d="M4 6.5h5M6.5 4v5" stroke="#1f5fb0" stroke-width="1.5"/><path d="M10 10l5 5" stroke="#2a3a5a" stroke-width="2.2"/></svg>
<svg class="a" style="left:773px;top:121px" width="17" height="17"><circle cx="6.5" cy="6.5" r="5" fill="#fff" stroke="#2a3a5a" stroke-width="1.6"/><path d="M4 6.5h5" stroke="#1f5fb0" stroke-width="1.5"/><path d="M10 10l5 5" stroke="#2a3a5a" stroke-width="2.2"/></svg>
<div class="a sep" style="left:796px;top:121px"></div>
<svg class="a" style="left:803px;top:121px" width="17" height="17"><rect x="2" y="3" width="13" height="11" fill="none" stroke="#9a9ea8" stroke-dasharray="2 1"/><path d="M6 3v11M11 3v11M2 8h13" stroke="#9a9ea8"/></svg>
<div class="a sep" style="left:827px;top:121px"></div>
<svg class="a" style="left:834px;top:121px" width="17" height="17"><path d="M3 1v7h4" stroke="#9a9ea8" stroke-width="1.2" fill="none"/><rect x="6" y="8" width="10" height="7" fill="#eceef2" stroke="#9a9ea8"/></svg>
<svg class="a" style="left:858px;top:121px" width="17" height="17"><rect x="1" y="2" width="10" height="7" fill="#eceef2" stroke="#9a9ea8"/><path d="M8 8l7 7M15 11v4h-4" stroke="#9a9ea8" stroke-width="1.2" fill="none"/></svg>
<svg class="a" style="left:881px;top:121px" width="17" height="17"><rect x="1" y="1" width="12" height="14" fill="#eceef2" stroke="#9a9ea8"/><circle cx="12" cy="12" r="3.5" fill="#eceef2" stroke="#9a9ea8"/></svg>
<svg class="a" style="left:904px;top:121px" width="17" height="17"><rect x="1" y="1" width="12" height="14" fill="#eceef2" stroke="#9a9ea8"/><path d="M3 5h7M3 8h5" stroke="#9a9ea8"/><circle cx="12" cy="12" r="3.5" fill="#eceef2" stroke="#9a9ea8"/></svg>
<div class="a sep" style="left:927px;top:121px"></div>
<div class="a" style="left:931px;top:120px;width:22px;height:19px;background:#f7e0a8;border:1px solid #e6c27a"></div>
<div class="tr" style="left:934px;top:124px;font-size:8px;font-weight:bold;color:#333">abcd</div>
<svg class="a" style="left:957px;top:121px" width="19" height="17"><text x="0" y="7" font-family="Liberation Sans" font-weight="bold" font-size="8" fill="#333">ab</text><text x="0" y="15" font-family="Liberation Sans" font-weight="bold" font-size="8" fill="#333">c</text><path d="M17 4v7H8M11 8l-3 3 3 3" stroke="#222" stroke-width="1.8" fill="none"/></svg>
<div class="tr" style="left:983px;top:124px;font-size:9px;font-weight:bold;color:#666">ab...</div>
<svg class="a" style="left:1004px;top:128px" width="7" height="5"><path d="M0 0h7L3.5 4z" fill="#777"/></svg>
<div class="a sep" style="left:1018px;top:121px"></div>
<div class="tr" style="left:1025px;top:124px;font-size:9px;font-weight:bold;color:#555">&lt;ab&gt;</div>
<div class="a" style="left:1676px;top:734px;width:19px;height:17px;border-radius:50%;background:#ececec"></div>
<div class="a" style="left:1670px;top:757px;width:31px;height:29px;border-radius:4px 4px 2px 2px;background:#faeaea"></div>
<div class="a" style="left:1677px;top:786px;width:17px;height:27px;background:#f3f3f3"></div>
<div class="a" style="left:456px;top:149px;width:4px;height:582px;background:#00d000"></div>
<div class="a" style="left:1707px;top:149px;width:5px;height:582px;background:#00d000"></div>
<div class="a" style="left:458px;top:731px;width:2px;height:53px;background:#333"></div>
<div class="a" style="left:1709px;top:731px;width:2px;height:53px;background:#333"></div>
<div class="a" style="left:458px;top:751px;width:1253px;height:2px;background:#4a4a4a"></div>
<div class="lbl" style="left:395px;top:745px;font-size:10px;line-height:14px;color:#a0a0a0">(End)</div>
<div class="lbl" style="left:395px;top:300px;font-size:10.5px;line-height:14px;color:#909090">5</div>
<div class="box" style="left:1161px;top:149px;width:167px;height:45px;border-top:none"></div>
<div class="lbl" style="left:1168px;top:166px;font-size:11.5px;line-height:14px">Source B</div>
<div class="val" style="left:1116px;width:200px;text-align:right;top:152px;font-size:11.2px;line-height:14px">3</div>
<div class="val" style="left:1116px;width:200px;text-align:right;top:166px;font-size:11.2px;line-height:14px">2</div>
<svg class="a" style="left:1318px;top:155px" width="10" height="8"><path d="M0 4L4.5 0V2h5v4h-5v2z" fill="#0000d8"/></svg>
<div class="a" style="left:1245px;top:151px;width:7px;height:2px;background:#555"></div>
<svg class="a" style="left:1418px;top:149px" width="19" height="6"><path d="M0.5 0v4.5h4M18.5 0v4.5h-4" stroke="#aaa" stroke-width="1" fill="none"/></svg>
<svg class="a" style="left:1599px;top:149px" width="15" height="5"><path d="M1 0c1 2 2 3 3 3.5M14 0c-1 2-2 3-3 3.5" stroke="#c4c4c4" stroke-width="1" fill="none"/></svg>
<div class="a" style="left:461px;top:307px;width:478px;height:1px;background:#ababab"></div>
<div class="a" style="left:1105px;top:307px;width:54px;height:1px;background:#ababab"></div>
<div class="a" style="left:1228px;top:307px;width:215px;height:1px;background:#ababab"></div>
<div class="a" style="left:1676px;top:307px;width:31px;height:1px;background:#ababab"></div>
<div class="a" style="left:886px;top:307px;width:2px;height:391px;background:#c0c0c0"></div>
<div class="a" style="left:907px;top:307px;width:2px;height:257px;background:#c0c0c0"></div>
<div class="a" style="left:1411px;top:307px;width:2px;height:257px;background:#c0c0c0"></div>
<div class="a" style="left:1690px;top:307px;width:2px;height:391px;background:#c0c0c0"></div>
<div class="a" style="left:908px;top:435px;width:31px;height:1px;background:#ababab"></div>
<div class="a" style="left:1105px;top:435px;width:55px;height:1px;background:#ababab"></div>
<div class="a" style="left:1232px;top:435px;width:180px;height:1px;background:#ababab"></div>
<div class="a" style="left:908px;top:563px;width:31px;height:1px;background:#ababab"></div>
<div class="a" style="left:1105px;top:563px;width:54px;height:1px;background:#ababab"></div>
<div class="a" style="left:1228px;top:563px;width:68px;height:1px;background:#ababab"></div>
<div class="a" style="left:1368px;top:563px;width:44px;height:1px;background:#ababab"></div>
<div class="a" style="left:887px;top:697px;width:51px;height:1px;background:#ababab"></div>
<div class="a" style="left:1022px;top:697px;width:585px;height:1px;background:#ababab"></div>
<div class="a" style="left:1660px;top:697px;width:31px;height:1px;background:#ababab"></div>
<div class="desc" style="left:922px;top:246px;width:181px;height:40px;line-height:13px;font-size:11.3px">SafeZone 3<br>Monitoring Case<br>Feedback</div>
<div class="box" style="left:939px;top:288px;width:167px;height:66px"><div class="h" style="height:12px;line-height:12px">EQU</div></div>
<div class="lbl" style="left:946px;top:300px;font-size:11.5px;line-height:14px">Source A</div>
<div class="val" style="left:1002px;top:300px;font-size:11.1px;line-height:14px">Sz3_MonCaseFbk</div>
<div class="val" style="left:894px;width:200px;text-align:right;top:313px;font-size:11.2px;line-height:14px">3</div>
<svg class="a" style="left:1096px;top:316px" width="10" height="8"><path d="M0 4L4.5 0V2h5v4h-5v2z" fill="#0000d8"/></svg>
<div class="lbl" style="left:946px;top:326px;font-size:11.5px;line-height:14px">Source B</div>
<div class="val" style="left:894px;width:200px;text-align:right;top:326px;font-size:11.2px;line-height:14px">1</div>
<div class="desc" style="left:922px;top:374px;width:181px;height:40px;line-height:13px;font-size:11.3px">SafeZone 3<br>Monitoring Case<br>Feedback</div>
<div class="box" style="left:939px;top:415px;width:167px;height:66px"><div class="h" style="height:13px;line-height:13px">EQU</div></div>
<div class="lbl" style="left:946px;top:428px;font-size:11.5px;line-height:14px">Source A</div>
<div class="val" style="left:1002px;top:428px;font-size:11.1px;line-height:14px">Sz3_MonCaseFbk</div>
<div class="val" style="left:894px;width:200px;text-align:right;top:441px;font-size:11.2px;line-height:14px">3</div>
<svg class="a" style="left:1096px;top:444px" width="10" height="8"><path d="M0 4L4.5 0V2h5v4h-5v2z" fill="#0000d8"/></svg>
<div class="lbl" style="left:946px;top:454px;font-size:11.5px;line-height:14px">Source B</div>
<div class="val" style="left:894px;width:200px;text-align:right;top:454px;font-size:11.2px;line-height:14px">2</div>
<div class="desc" style="left:922px;top:502px;width:181px;height:40px;line-height:13px;font-size:11.3px">SafeZone 3<br>Monitoring Case<br>Feedback</div>
<div class="box" style="left:939px;top:543px;width:167px;height:66px"><div class="h" style="height:13px;line-height:13px">EQU</div></div>
<div class="lbl" style="left:946px;top:556px;font-size:11.5px;line-height:14px">Source A</div>
<div class="val" style="left:1002px;top:556px;font-size:11.1px;line-height:14px">Sz3_MonCaseFbk</div>
<div class="val" style="left:894px;width:200px;text-align:right;top:569px;font-size:11.2px;line-height:14px">3</div>
<svg class="a" style="left:1096px;top:572px" width="10" height="8"><path d="M0 4L4.5 0V2h5v4h-5v2z" fill="#0000d8"/></svg>
<div class="lbl" style="left:946px;top:582px;font-size:11.5px;line-height:14px">Source B</div>
<div class="val" style="left:894px;width:200px;text-align:right;top:582px;font-size:11.2px;line-height:14px">3</div>
<div class="desc" style="left:1130px;top:246px;width:126px;height:40px;line-height:13px;font-size:11.3px">SafeZone 3<br>Front Left<br>Safety Ok</div>
<div class="val" style="left:1092px;width:200px;text-align:center;top:286px;font-size:11.4px;line-height:14px">Sz3_FrontLeft_Sfty_Ok</div>
<div class="gb" style="left:1159px;top:304px;width:28px"></div>
<div class="gb" style="left:1200px;top:304px;width:28px"></div>
<svg class="a" style="left:1184px;top:301px" width="20" height="15"><path d="M1.5 0.5h4v13h-4M18.5 0.5h-5v13h5" stroke="#b4b4b4" stroke-width="1.2" fill="none"/></svg>
<div class="desc" style="left:1129px;top:373px;width:132px;height:40px;line-height:13px;font-size:11.3px">SafeZone 3<br>Front Right<br>Safety Ok</div>
<div class="val" style="left:1094px;width:200px;text-align:center;top:414px;font-size:11.2px;line-height:14px">Sz3_FrontRight_Sfty_Ok</div>
<div class="gb" style="left:1161px;top:432px;width:29px"></div>
<div class="gb" style="left:1203px;top:432px;width:29px"></div>
<svg class="a" style="left:1187px;top:429px" width="20" height="15"><path d="M1.5 0.5h4v13h-4M18.5 0.5h-5v13h5" stroke="#b4b4b4" stroke-width="1.2" fill="none"/></svg>
<div class="desc" style="left:1129px;top:502px;width:127px;height:40px;line-height:13px;font-size:11.3px">SafeZone 3<br>Front Left<br>Safety Ok</div>
<div class="val" style="left:1092px;width:200px;text-align:center;top:542px;font-size:11.4px;line-height:14px">Sz3_FrontLeft_Sfty_Ok</div>
<div class="gb" style="left:1159px;top:560px;width:28px"></div>
<div class="gb" style="left:1200px;top:560px;width:28px"></div>
<svg class="a" style="left:1184px;top:557px" width="20" height="15"><path d="M1.5 0.5h4v13h-4M18.5 0.5h-5v13h5" stroke="#b4b4b4" stroke-width="1.2" fill="none"/></svg>
<div class="desc" style="left:1265px;top:502px;width:131px;height:40px;line-height:13px;font-size:11.3px">SafeZone 3<br>Front Right<br>Safety Ok</div>
<div class="val" style="left:1229px;width:200px;text-align:center;top:542px;font-size:11.2px;line-height:14px">Sz3_FrontRight_Sfty_Ok</div>
<div class="gb" style="left:1296px;top:560px;width:31px"></div>
<div class="gb" style="left:1338px;top:560px;width:30px"></div>
<svg class="a" style="left:1324px;top:557px" width="18" height="15"><path d="M1.5 0.5h4v13h-4M16.5 0.5h-5v13h5" stroke="#b4b4b4" stroke-width="1.2" fill="none"/></svg>
<div class="desc" style="left:901px;top:635px;width:155px;height:40px;line-height:13px;font-size:11.3px">SafeZone 3<br>Monitoring Case<br>Switching Time</div>
<div class="val" style="left:878px;width:200px;text-align:center;top:676px;font-size:11.1px;line-height:14px">Sz3_MonCaseSwitchTMR.DN</div>
<div class="gb" style="left:938px;top:694px;width:35px"></div>
<div class="gb" style="left:986px;top:694px;width:36px"></div>
<svg class="a" style="left:970px;top:691px" width="20" height="15"><path d="M1.5 0.5h4v13h-4M18.5 0.5h-5v13h5" stroke="#b4b4b4" stroke-width="1.2" fill="none"/></svg>
<div class="desc" style="left:1427px;top:247px;width:231px;height:40px;line-height:13px;font-size:11.3px">SafeZone 3<br>Monitoring Case<br>Switching Time</div>
<div class="box" style="left:1443px;top:288px;width:186px;height:53px"><div class="h" style="height:12px;line-height:12px">TOF</div></div>
<div class="lbl" style="left:1451px;top:300px;font-size:11.5px;line-height:14px">Timer</div>
<div class="val" style="left:1486px;top:300px;font-size:11.3px;line-height:14px">Sz3_MonCaseSwitchTMR</div>
<div class="lbl" style="left:1451px;top:313px;font-size:11.5px;line-height:14px">Preset</div>
<div class="val" style="left:1417px;width:200px;text-align:right;top:313px;font-size:11.2px;line-height:14px">50</div>
<svg class="a" style="left:1619px;top:316px" width="10" height="8"><path d="M0 4L4.5 0V2h5v4h-5v2z" fill="#0000d8"/></svg>
<div class="lbl" style="left:1451px;top:326px;font-size:11.5px;line-height:14px">Accum</div>
<div class="val" style="left:1417px;width:200px;text-align:right;top:326px;font-size:11.2px;line-height:14px">0</div>
<svg class="a" style="left:1619px;top:329px" width="10" height="8"><path d="M0 4L4.5 0V2h5v4h-5v2z" fill="#0000d8"/></svg>
<div class="gb" style="left:1629px;top:304px;width:8px"></div>
<div class="gb" style="left:1662px;top:304px;width:14px"></div>
<div class="lbl" style="left:1636px;top:300px;font-size:10.5px;line-height:14px;color:#a8a8a8;letter-spacing:-0.3px">(<span style="letter-spacing:0">EN</span>)</div>
<div class="gb" style="left:1629px;top:317px;width:8px"></div>
<div class="gb" style="left:1662px;top:317px;width:14px"></div>
<div class="lbl" style="left:1636px;top:313px;font-size:10.5px;line-height:14px;color:#a8a8a8;letter-spacing:-0.3px">(<span style="letter-spacing:0">DN</span>)</div>
<div class="desc" style="left:1589px;top:648px;width:86px;height:27px;line-height:13px;font-size:11.3px">SafeZone 3<br>Safety Field Ok</div>
<div class="val" style="left:1532px;width:200px;text-align:center;top:676px;font-size:11.5px;line-height:14px">Sz3_Sfty_Ok</div>
<div class="gb" style="left:1607px;top:694px;width:18px"></div>
<div class="gb" style="left:1644px;top:694px;width:16px"></div>
<svg class="a" style="left:1622px;top:689px" width="24" height="16"><path d="M6 1C1 4 1 12 6 15M18 1c5 3 5 11 0 14" stroke="#c8c8c8" stroke-width="1.1" fill="none"/></svg>
<svg class="a" style="left:1626px;top:705px" width="14" height="20"><path d="M1 1v15l3.5-3.5 3 6 2.2-1-3-6H12z" fill="#fff" stroke="#222" stroke-width="1"/></svg>
<div class="a" style="left:1731px;top:149px;width:17px;height:667px;background:#eaebef;border-left:1px solid #dcdde2"></div>
<div class="a" style="left:1748px;top:141px;width:4px;height:695px;background:#d2d6de"></div>
<svg class="a" style="left:1735px;top:155px" width="9" height="6"><path d="M0.5 5.5h8L4.5 0.5z" fill="#333"/></svg>
<svg class="a" style="left:1735px;top:804px" width="9" height="6"><path d="M0.5 0.5h8L4.5 5.5z" fill="#333"/></svg>
<div class="a" style="left:1732px;top:484px;width:15px;height:155px;border:1px solid #9a9ca2;border-radius:2px;background:linear-gradient(90deg,#f4f4f6,#d4d6da)"></div>
<svg class="a" style="left:1736px;top:557px" width="7" height="8"><path d="M0 1h7M0 4h7M0 7h7" stroke="#333" stroke-width="1"/></svg>
<div class="a" style="left:386px;top:816px;width:1362px;height:18px;background:#cfd3dc"></div>
<svg class="a" style="left:392px;top:821px" width="6" height="9"><path d="M5.5 0.5v8L0.5 4.5z" fill="#555"/></svg>
<svg class="a" style="left:1719px;top:821px" width="6" height="9"><path d="M0.5 0.5v8l5-4z" fill="#555"/></svg>
<div class="a" style="left:403px;top:821px;width:18px;height:8px;background:#b8bcc6;border-radius:1px"></div>
</body></html>
